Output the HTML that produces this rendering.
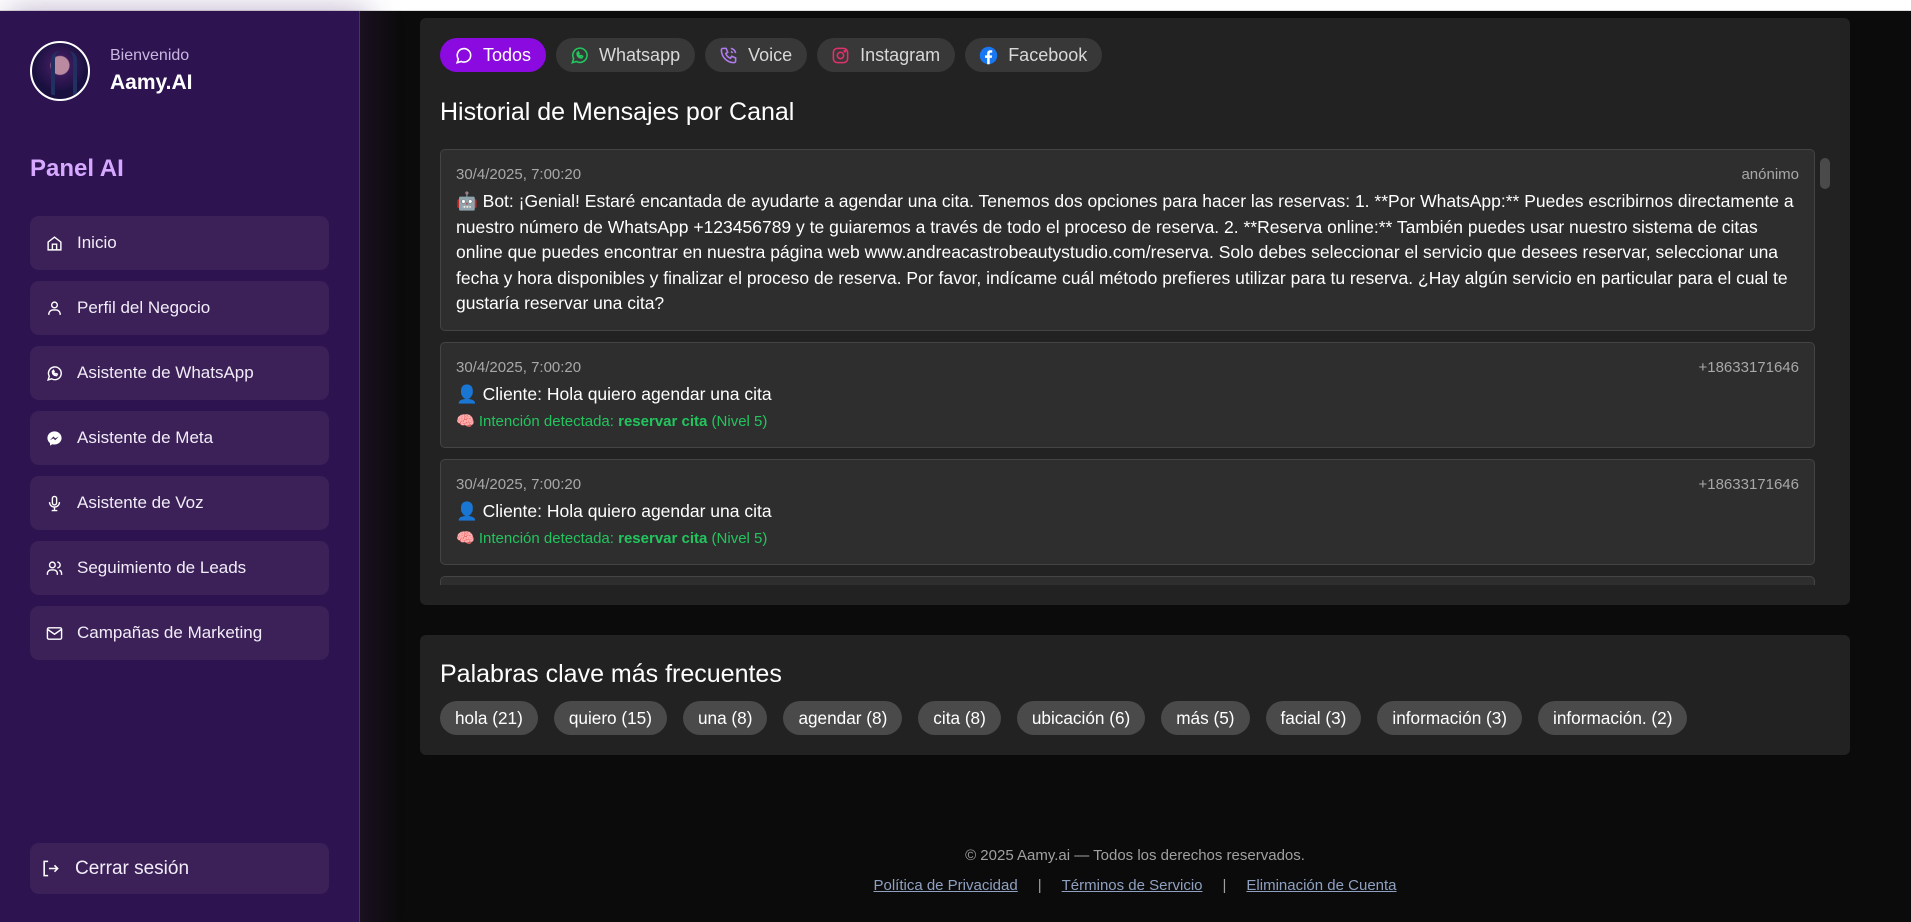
<!DOCTYPE html>
<html><head><meta charset="utf-8">
<style>
*{box-sizing:border-box;margin:0;padding:0}
html,body{width:1911px;height:922px;overflow:hidden;background:#0b0b0b;font-family:"Liberation Sans",Arial,sans-serif;color:#fff}
.topbar{position:absolute;left:0;top:0;width:1911px;height:11px;background:#fff;border-bottom:1px solid #ddd}
.side{position:absolute;left:0;top:11px;width:360px;height:911px;background:#2d1450;box-shadow:8px 0 30px rgba(60,20,100,.35);border-right:1px solid #4a3070}
.shadow{position:absolute;left:360px;top:11px;width:40px;height:911px;background:linear-gradient(90deg,#1a1020,#0b0b0b)}
.avatar{position:absolute;left:30px;top:41px;width:60px;height:60px;border-radius:50%;border:2px solid #fff;background:radial-gradient(circle at 50% 40%,#b98aa0 0 9px,#3a1a5a 10px,#1a1040 26px);overflow:hidden}
.avatar:after{content:"";position:absolute;left:19px;top:8px;width:18px;height:44px;border-radius:9px 9px 2px 2px;border-left:4px solid #203060;border-right:4px solid #203060}
.welcome{position:absolute;left:110px;top:47px;font-size:16px;color:#c9b6df}
.name{position:absolute;left:110px;top:71px;font-size:21px;font-weight:bold}
.panel{position:absolute;left:30px;top:155px;font-size:24px;font-weight:bold;color:#d6a8ff}
.nav{position:absolute;left:30px;width:299px;height:54px;background:#3b2158;border-radius:9px;display:flex;align-items:center;padding-left:16px;font-size:17px;color:#f2ecf8}
.nav svg{width:17px;height:17px;margin-right:14px;flex:none}
.card{position:absolute;left:420px;width:1430px;background:#222;border-radius:6px}
.tabs{position:absolute;left:20px;top:20px;display:flex;gap:10px}
.tab{height:34px;border-radius:17px;background:#383838;display:flex;align-items:center;padding:0 15px 0 14px;font-size:18px;color:#d8d8d8}
.tab svg{width:19px;height:19px;margin-right:10px}
.tab.on{background:#8a0ae0;color:#fff}
h2{position:absolute;left:20px;font-weight:normal;font-size:25px;color:#fff}
.list{position:absolute;left:20px;top:131px;width:1375px;height:436px;overflow:hidden}
.msg{background:#2e2e2e;border:1px solid #444;border-radius:5px;padding:16px 15px 14px 15px;margin-bottom:11px;position:relative}
.date{font-size:15px;color:#a8a8a8;height:20px}
.who{position:absolute;right:15px;top:16px;font-size:15px;color:#a8a8a8}
.txt{font-size:17.5px;line-height:25.6px;color:#fff;margin-top:3px}
.int{font-size:15px;color:#22c55e;margin-top:4px}
.scroll{position:absolute;left:1400px;top:140px;width:10px;height:31px;border-radius:5px;background:#4a4a4a}
.chips{position:absolute;left:20px;top:66px;display:flex;gap:16px}
.chip{height:34px;border-radius:17px;background:#4a4a4a;padding:0 15px;display:flex;align-items:center;font-size:17.2px}
.foot{position:absolute;left:380px;width:1510px;text-align:center;color:#a0a0a0;font-size:15px}
.foot a{color:#8fa0c0;text-decoration:underline}
.foot span{margin:0 20px;color:#a0a0a0}
</style></head><body>
<div class="topbar"></div>
<div class="side"></div>
<div class="shadow"></div>
<div class="avatar"></div>
<div class="welcome">Bienvenido</div>
<div class="name">Aamy.AI</div>
<div class="panel">Panel AI</div>

<div class="nav" style="top:216px"><svg viewBox="0 0 24 24" fill="none" stroke="#fff" stroke-width="2"><path d="M3 10l9-7 9 7v11H3z"/><path d="M9 21v-8h6v8"/></svg>Inicio</div>
<div class="nav" style="top:281px"><svg viewBox="0 0 24 24" fill="none" stroke="#fff" stroke-width="2"><circle cx="12" cy="7" r="4"/><path d="M4 21v-2a6 6 0 0 1 6-5h4a6 6 0 0 1 6 5v2"/></svg>Perfil del Negocio</div>
<div class="nav" style="top:346px"><svg viewBox="0 0 24 24" fill="none" stroke="#fff" stroke-width="2"><path d="M3 21l1.6-5A9 9 0 1 1 8 19.5z"/><path d="M9 9c0 4 2 6 6 6l1-2-2-1-1 1c-1-.5-2-1.5-2.5-2.5l1-1-1-2z"/></svg>Asistente de WhatsApp</div>
<div class="nav" style="top:411px"><svg viewBox="0 0 24 24"><path fill="#fff" d="M12 2C6.5 2 2 6.1 2 11.3c0 3 1.4 5.5 3.7 7.2V22l3.4-1.9c.9.3 1.9.4 2.9.4 5.5 0 10-4.1 10-9.2S17.5 2 12 2z"/><path fill="#3b2158" d="M5.5 14.5l5-5.3 2.6 2.6 4.9-2.6-5 5.3-2.6-2.6z"/></svg>Asistente de Meta</div>
<div class="nav" style="top:476px"><svg viewBox="0 0 24 24" fill="none" stroke="#fff" stroke-width="2"><rect x="9" y="2" width="6" height="12" rx="3"/><path d="M5 10a7 7 0 0 0 14 0M12 17v5M8 22h8"/></svg>Asistente de Voz</div>
<div class="nav" style="top:541px"><svg viewBox="0 0 24 24" fill="none" stroke="#fff" stroke-width="2"><circle cx="9" cy="7" r="4"/><path d="M2 21v-2a5 5 0 0 1 5-5h4a5 5 0 0 1 5 5v2M16 3a4 4 0 0 1 0 8M22 21v-2a5 5 0 0 0-3-4.6"/></svg>Seguimiento de Leads</div>
<div class="nav" style="top:606px"><svg viewBox="0 0 24 24" fill="none" stroke="#fff" stroke-width="2"><rect x="2" y="4" width="20" height="16" rx="2"/><path d="M2 6l10 7 10-7"/></svg>Campañas de Marketing</div>
<div class="nav" style="top:843px;height:51px;font-size:19px;padding-left:11px"><svg viewBox="0 0 24 24" fill="none" stroke="#fff" stroke-width="2" style="width:19px;height:19px;margin-right:15px"><path d="M9 3H4v18h5M10 12h11M17 8l4 4-4 4"/></svg>Cerrar sesión</div>

<div class="card" style="top:18px;height:587px">
 <div class="tabs">
  <div class="tab on"><svg viewBox="0 0 24 24" fill="none" stroke="#fff" stroke-width="2"><path d="M4 21l1.5-4.5A8.5 8.5 0 1 1 9 19.5z"/></svg>Todos</div>
  <div class="tab"><svg viewBox="0 0 24 24" fill="none" stroke="#22c55e" stroke-width="2"><path d="M3 21l1.6-5A9 9 0 1 1 8 19.5z"/><path d="M9 9c0 4 2 6 6 6l1-2-2-1-1 1c-1-.5-2-1.5-2.5-2.5l1-1-1-2z"/></svg>Whatsapp</div>
  <div class="tab"><svg viewBox="0 0 24 24" fill="none" stroke="#b07cf0" stroke-width="2"><path d="M5 3h4l2 5-2.5 1.5a11 11 0 0 0 6 6L16 13l5 2v4a2 2 0 0 1-2 2A16 16 0 0 1 3 5a2 2 0 0 1 2-2z"/><path d="M15 7a3 3 0 0 1 2 2M15 3a7 7 0 0 1 6 6"/></svg>Voice</div>
  <div class="tab"><svg viewBox="0 0 24 24" fill="none" stroke="#e1306c" stroke-width="2"><rect x="3" y="3" width="18" height="18" rx="5"/><circle cx="12" cy="12" r="4"/><circle cx="17.5" cy="6.5" r=".8" fill="#e1306c"/></svg>Instagram</div>
  <div class="tab"><svg viewBox="0 0 24 24"><circle cx="12" cy="12" r="11" fill="#1877f2"/><path fill="#fff" d="M13.5 23v-8h2.7l.4-3.2h-3.1V9.8c0-.9.3-1.5 1.6-1.5h1.6V5.5c-.3 0-1.3-.1-2.4-.1-2.4 0-4 1.4-4 4.1v2.3H7.6V15h2.7v8z"/></svg>Facebook</div>
 </div>
 <h2 style="top:80px">Historial de Mensajes por Canal</h2>
 <div class="list">
  <div class="msg" style="height:182px"><div class="date">30/4/2025, 7:00:20</div><div class="who">anónimo</div>
   <div class="txt">🤖 Bot: ¡Genial! Estaré encantada de ayudarte a agendar una cita. Tenemos dos opciones para hacer las reservas: 1. **Por WhatsApp:** Puedes escribirnos directamente a nuestro número de WhatsApp +123456789 y te guiaremos a través de todo el proceso de reserva. 2. **Reserva online:** También puedes usar nuestro sistema de citas online que puedes encontrar en nuestra página web www.andreacastrobeautystudio.com/reserva. Solo debes seleccionar el servicio que desees reservar, seleccionar una fecha y hora disponibles y finalizar el proceso de reserva. Por favor, indícame cuál método prefieres utilizar para tu reserva. ¿Hay algún servicio en particular para el cual te gustaría reservar una cita?</div></div>
  <div class="msg" style="height:106px"><div class="date">30/4/2025, 7:00:20</div><div class="who">+18633171646</div>
   <div class="txt">👤 Cliente: Hola quiero agendar una cita</div>
   <div class="int">🧠 Intención detectada: <b>reservar cita</b> (Nivel 5)</div></div>
  <div class="msg" style="height:106px"><div class="date">30/4/2025, 7:00:20</div><div class="who">+18633171646</div>
   <div class="txt">👤 Cliente: Hola quiero agendar una cita</div>
   <div class="int">🧠 Intención detectada: <b>reservar cita</b> (Nivel 5)</div></div>
  <div class="msg" style="height:106px"></div>
 </div>
 <div class="scroll"></div>
</div>

<div class="card" style="top:635px;height:120px">
 <h2 style="top:25px">Palabras clave más frecuentes</h2>
 <div class="chips">
  <div class="chip">hola (21)</div><div class="chip">quiero (15)</div><div class="chip">una (8)</div><div class="chip">agendar (8)</div><div class="chip">cita (8)</div><div class="chip">ubicación (6)</div><div class="chip">más (5)</div><div class="chip">facial (3)</div><div class="chip">información (3)</div><div class="chip">información. (2)</div>
 </div>
</div>

<div class="foot" style="top:847px">© 2025 Aamy.ai — Todos los derechos reservados.</div>
<div class="foot" style="top:877px"><a>Política de Privacidad</a><span>|</span><a>Términos de Servicio</a><span>|</span><a>Eliminación de Cuenta</a></div>
</body></html>
